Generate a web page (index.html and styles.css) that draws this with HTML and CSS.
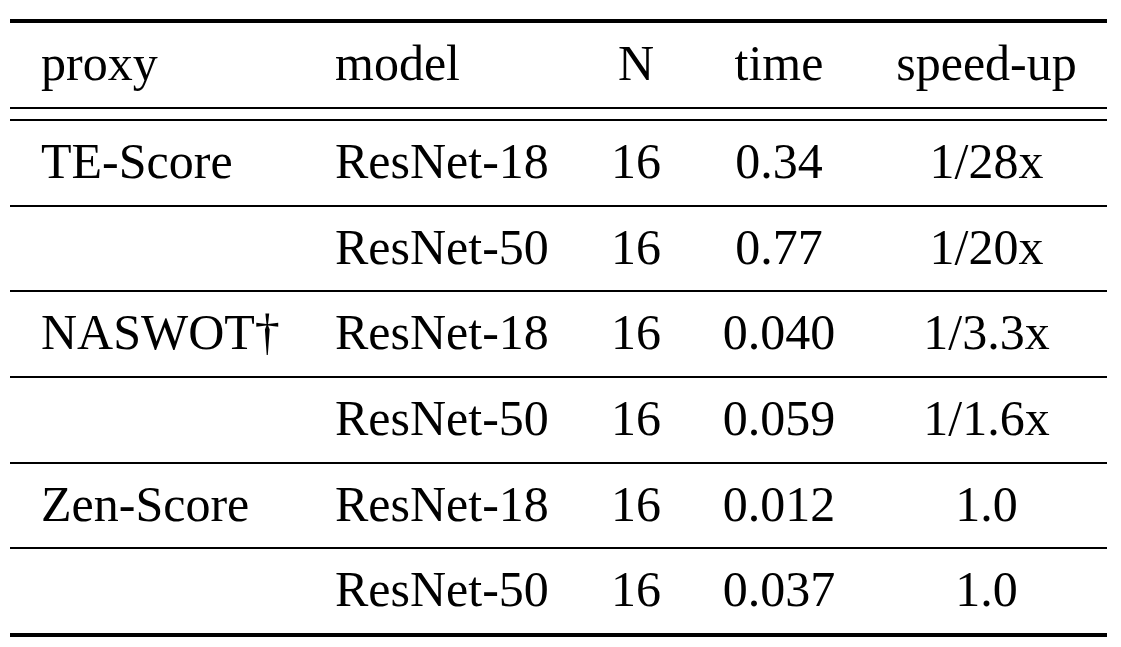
FILE: index.html
```html
<!DOCTYPE html>
<html lang="en">
<head>
<meta charset="utf-8">
<title>Proxy timing table</title>
<link rel="stylesheet" href="styles.css">
</head>
<body>
<div class="table">
  <div class="row head">
    <div class="cell c1">proxy</div>
    <div class="cell c2">model</div>
    <div class="cell c3">N</div>
    <div class="cell c4">time</div>
    <div class="cell c5">speed-up</div>
  </div>
  <div class="body">
    <div class="row">
      <div class="cell c1">TE-Score</div>
      <div class="cell c2">ResNet-18</div>
      <div class="cell c3">16</div>
      <div class="cell c4">0.34</div>
      <div class="cell c5">1/28x</div>
    </div>
    <div class="row">
      <div class="cell c1"></div>
      <div class="cell c2">ResNet-50</div>
      <div class="cell c3">16</div>
      <div class="cell c4">0.77</div>
      <div class="cell c5">1/20x</div>
    </div>
    <div class="row">
      <div class="cell c1">NASWOT†</div>
      <div class="cell c2">ResNet-18</div>
      <div class="cell c3">16</div>
      <div class="cell c4">0.040</div>
      <div class="cell c5">1/3.3x</div>
    </div>
    <div class="row">
      <div class="cell c1"></div>
      <div class="cell c2">ResNet-50</div>
      <div class="cell c3">16</div>
      <div class="cell c4">0.059</div>
      <div class="cell c5">1/1.6x</div>
    </div>
    <div class="row">
      <div class="cell c1">Zen-Score</div>
      <div class="cell c2">ResNet-18</div>
      <div class="cell c3">16</div>
      <div class="cell c4">0.012</div>
      <div class="cell c5">1.0</div>
    </div>
    <div class="row last">
      <div class="cell c1"></div>
      <div class="cell c2">ResNet-50</div>
      <div class="cell c3">16</div>
      <div class="cell c4">0.037</div>
      <div class="cell c5">1.0</div>
    </div>
  </div>
</div>
</body>
</html>
```
FILE: styles.css
```css
html, body {
  margin: 0;
  padding: 0;
  background: #ffffff;
}

body {
  font-family: "Liberation Serif", "Times New Roman", serif;
  font-size: 50px;
  color: #000000;
}

.table {
  width: 1097px;
  margin: 19px 0 0 10px;
  border-top: 4px solid #000000;
  border-bottom: 4px solid #000000;
}

.row {
  display: grid;
  grid-template-columns: 295px 275px 112px 174px 241px;
  height: 83.7px;
  border-bottom: 2px solid #000000;
}

.row.head {
  height: 84px;
}

.row.last {
  border-bottom: none;
}

.body {
  margin-top: 10px;
  border-top: 2px solid #000000;
}

.cell {
  padding-top: 10px;
  line-height: 60px;
  white-space: nowrap;
}

.c1 {
  padding-left: 31px;
}

.c2 {
  padding-left: 30px;
}

.c3,
.c4,
.c5 {
  text-align: center;
}
```
